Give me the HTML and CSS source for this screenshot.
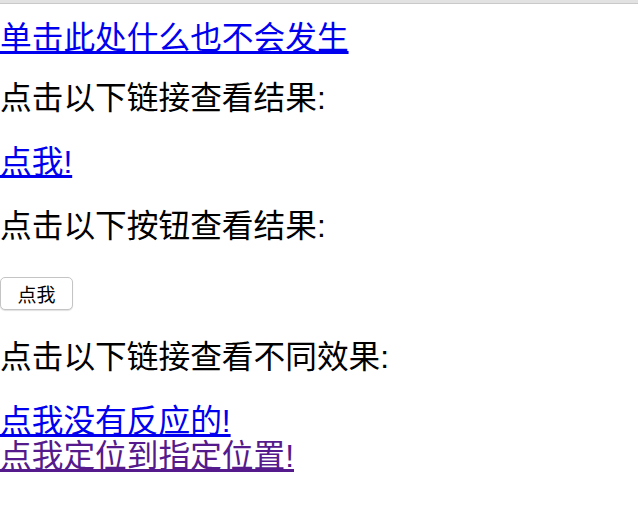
FILE: index.html
```html
<!DOCTYPE html>
<html lang="zh-CN">
<head>
<meta charset="utf-8">
<title>链接示例</title>
<link rel="stylesheet" href="styles.css">
</head>
<body>
<div class="topbar"></div>
<div class="page">
  <div class="lead"><a class="link" href="#">单击此处什么也不会发生</a></div>
  <p class="para first">点击以下链接查看结果:</p>
  <p class="para"><a class="link" href="#">点我!</a></p>
  <p class="para">点击以下按钮查看结果:</p>
  <div class="btn-row"><button class="btn" type="button">点我</button></div>
  <p class="para">点击以下链接查看不同效果:</p>
  <p class="para"><a class="link" href="#">点我没有反应的!</a><br><a class="link visited" href="#">点我定位到指定位置!</a></p>
</div>
</body>
</html>
```
FILE: styles.css
```css
html, body {
  margin: 0;
  padding: 0;
  background: #ffffff;
}
body {
  font-family: "Liberation Sans", "Noto Sans CJK SC", sans-serif;
  font-size: 31.7px;
  line-height: 32px;
  color: #000000;
}
.topbar {
  height: 3px;
  background: #e2e2e2;
  border-bottom: 1px solid #c9c9c9;
}
.page {
  padding-top: 18px;
}
.lead {
  margin: 0;
}
.para {
  margin: 32px 0;
}
.para.first {
  margin-top: 28px;
}
.link {
  color: #0000ee;
  text-decoration: underline;
}
.link.visited {
  color: #551a8b;
  line-height: 38px;
}
.btn-row {
  margin: 32px 0;
  padding-top: 3px;
  height: 32px;
  display: flex;
  align-items: flex-start;
}
.btn {
  height: 33px;
  width: 73px;
  margin: 0;
  padding: 0;
  font-family: "Liberation Sans", "Noto Sans CJK SC", sans-serif;
  font-size: 19px;
  color: #000000;
  background: #ffffff;
  border: 1px solid #c4c4c4;
  border-radius: 5px;
  box-shadow: 0 1px 1px rgba(0, 0, 0, 0.12);
}
```
